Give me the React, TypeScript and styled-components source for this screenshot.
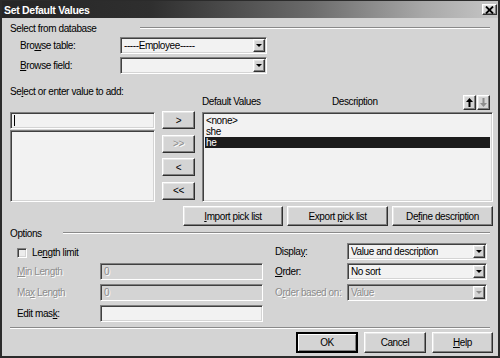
import React from 'react';
import styled, { createGlobalStyle, css } from 'styled-components';

const Global = createGlobalStyle`
  html, body { margin: 0; padding: 0; background: #d4d4d4; }
  body {
    font-family: "Liberation Sans", Arial, sans-serif;
    font-size: 10px;
    letter-spacing: -0.4px;
    color: #000;
  }
  * { box-sizing: border-box; }
`;

const sunken = css`
  border: 1px solid;
  border-color: #808080 #ffffff #ffffff #808080;
  box-shadow: inset 1px 1px 0 #404040, inset -1px -1px 0 #d4d4d4;
`;

const raised = css`
  border: 1px solid;
  border-color: #ffffff #303030 #303030 #ffffff;
  box-shadow: inset -1px -1px 0 #808080, inset 1px 1px 0 #e6e6e6;
  background: #d4d4d4;
`;

const disabledText = css`
  color: #8c8c8c;
  text-shadow: 1px 1px 0 #ffffff;
`;

const Window = styled.div`
  width: 500px;
  height: 358px;
  display: flex;
  flex-direction: column;
  background: #d4d4d4;
  border: 2px solid #2b2b2b;
  border-top-width: 1px;
  overflow: hidden;
`;

const TitleBar = styled.div`
  height: 17px;
  flex: none;
  display: flex;
  align-items: center;
  justify-content: space-between;
  padding: 0 1px 0 2px;
  background: linear-gradient(90deg, #262626 0%, #2f2f2f 30%, #6a6a6a 62%, #a8a8a8 85%, #c6c6c6 100%);
`;

const Title = styled.span`
  color: #fff;
  font-weight: bold;
  font-size: 10.5px;
  letter-spacing: -0.3px;
`;

const CloseButton = styled.span`
  ${raised};
  width: 15px;
  height: 11px;
  display: flex;
  align-items: center;
  justify-content: center;
`;

const Body = styled.div`
  flex: 1;
  display: flex;
  flex-direction: column;
  padding: 0 5px 0 8px;
`;

const GroupHeader = styled.div<{ $top: number }>`
  display: flex;
  height: 12px;
  line-height: 12px;
  margin-top: ${p => p.$top}px;
  padding-right: 3px;
`;

const GroupLine = styled.div<{ $width: number }>`
  margin-left: auto;
  margin-top: 4px;
  width: ${p => p.$width}px;
  height: 2px;
  border-top: 1px solid #8a8a8a;
  border-bottom: 1px solid #ffffff;
`;

const FieldRow = styled.div<{ $top: number }>`
  display: flex;
  align-items: center;
  height: 17px;
  margin-top: ${p => p.$top}px;
`;

const RowLabel = styled.span<{ $indent: number; $width: number }>`
  margin-left: ${p => p.$indent}px;
  width: ${p => p.$width}px;
`;

const U = styled.span`
  text-decoration: underline;
  text-underline-offset: 1px;
`;

const SelectBox = styled.div<{ $width?: number; $disabled?: boolean }>`
  ${sunken};
  width: ${p => (p.$width ? `${p.$width}px` : '100%')};
  height: 17px;
  display: flex;
  align-items: center;
  padding: 1px 1px 1px 3px;
  background: ${p => (p.$disabled ? '#d4d4d4' : '#f2f2f2')};
`;

const SelectText = styled.span<{ $disabled?: boolean }>`
  flex: 1;
  white-space: nowrap;
  overflow: hidden;
  ${p => p.$disabled && disabledText};
`;

const DropButton = styled.span`
  ${raised};
  width: 12px;
  height: 13px;
  flex: none;
  display: flex;
  align-items: center;
  justify-content: center;
`;

const Triangle = styled.span<{ $disabled?: boolean }>`
  width: 0;
  height: 0;
  border-left: 3px solid transparent;
  border-right: 3px solid transparent;
  border-top: 3px solid ${p => (p.$disabled ? '#8c8c8c' : '#000')};
`;

const MidGrid = styled.div`
  display: grid;
  grid-template-columns: 145px 33px 291px;
  grid-template-rows: 24px 90px;
  column-gap: 7px;
  row-gap: 2px;
  margin-top: 12px;
`;

const MidLabel = styled.div`
  grid-column: 1 / 3;
  line-height: 12px;
  white-space: nowrap;
`;

const ListHeader = styled.div`
  grid-column: 3;
  display: flex;
  align-items: flex-end;
  padding-right: 3px;
`;

const HeaderCell = styled.span<{ $width?: number }>`
  line-height: 12px;
  margin-bottom: 2px;
  ${p => (p.$width ? `width: ${p.$width}px;` : 'flex: 1;')}
`;

const ArrowButton = styled.span`
  ${raised};
  width: 13px;
  height: 15px;
  margin-left: 1px;
  display: flex;
  align-items: center;
  justify-content: center;
`;

const LeftColumn = styled.div`
  display: flex;
  flex-direction: column;
  gap: 1px;
`;

const TextInput = styled.div<{ $disabled?: boolean; $caret?: boolean }>`
  ${sunken};
  height: 17px;
  flex: none;
  padding: 0 3px;
  line-height: 15px;
  background: ${p => (p.$disabled ? '#d4d4d4' : '#f2f2f2')};
  ${p => p.$disabled && disabledText};
  ${p => p.$caret && css`
    &::before {
      content: '';
      display: inline-block;
      width: 1px;
      height: 11px;
      margin-top: 2px;
      background: #000;
      vertical-align: top;
    }
  `}
`;

const ListBox = styled.div`
  ${sunken};
  flex: 1;
  background: #f2f2f2;
  padding: 2px;
`;

const Item = styled.div<{ $selected?: boolean }>`
  height: 11px;
  line-height: 11px;
  padding-left: 1px;
  white-space: nowrap;
  ${p => p.$selected && css`
    background: #1c1c1c;
    color: #fff;
  `}
`;

const MoveColumn = styled.div`
  display: flex;
  flex-direction: column;
  justify-content: space-between;
  margin-top: -1px;
  margin-bottom: 2px;
`;

const ButtonFace = styled.span<{ $width?: number; $height: number; $disabled?: boolean; $default?: boolean }>`
  ${raised};
  width: ${p => (p.$width ? `${p.$width}px` : '100%')};
  height: ${p => p.$height}px;
  display: flex;
  align-items: center;
  justify-content: center;
  white-space: pre;
  ${p => p.$disabled && disabledText};
  ${p => p.$default && css`
    border-width: 2px;
    border-color: #000 #000 #000 #000;
    box-shadow: inset 1px 1px 0 #fff, inset -1px -1px 0 #808080;
  `}
`;

const ButtonLabel = styled.span`
  white-space: pre;
`;

const Button: React.FC<{
  width?: number;
  height: number;
  disabled?: boolean;
  isDefault?: boolean;
  children?: React.ReactNode;
}> = ({ width, height, disabled, isDefault, children }) => (
  <ButtonFace $width={width} $height={height} $disabled={disabled} $default={isDefault}>
    <ButtonLabel>{children}</ButtonLabel>
  </ButtonFace>
);

const ButtonRow = styled.div<{ $top: number; $gap: number }>`
  display: flex;
  justify-content: flex-end;
  gap: ${p => p.$gap}px;
  margin-top: ${p => p.$top}px;
`;

const OptionsArea = styled.div`
  display: flex;
  gap: 12px;
  margin-top: 3px;
  padding-left: 7px;
`;

const OptionsGrid = styled.div<{ $cols: string }>`
  display: grid;
  grid-template-columns: ${p => p.$cols};
  grid-template-rows: 20px 21px 21px 17px;
  align-items: start;
`;

const OptLabel = styled.span<{ $disabled?: boolean }>`
  line-height: 17px;
  white-space: nowrap;
  ${p => p.$disabled && disabledText};
`;

const CheckRow = styled.label`
  grid-column: 1 / 3;
  display: flex;
  align-items: center;
  height: 17px;
  margin-top: 1px;
`;

const CheckBox = styled.span`
  ${sunken};
  width: 10px;
  height: 10px;
  background: #ececec;
  margin-right: 5px;
`;

const Separator = styled.div`
  height: 2px;
  margin-top: 5px;
  margin-right: 3px;
  border-top: 1px solid #8a8a8a;
  border-bottom: 1px solid #ffffff;
`;

const Select: React.FC<{ value: string; width?: number; disabled?: boolean }> = ({ value, width, disabled }) => (
  <SelectBox $width={width} $disabled={disabled}>
    <SelectText $disabled={disabled}>{value}</SelectText>
    <DropButton>
      <Triangle $disabled={disabled} />
    </DropButton>
  </SelectBox>
);

const UpArrow: React.FC<{ color: string; down?: boolean }> = ({ color, down }) => (
  <svg width="7" height="9" viewBox="0 0 7 9" style={down ? { transform: 'rotate(180deg)' } : undefined}>
    <polygon points="3.5,0 7,4 4.5,4 4.5,9 2.5,9 2.5,4 0,4" fill={color} />
  </svg>
);

export default function App() {
  return (
    <>
      <Global />
      <Window>
        <TitleBar>
          <Title>Set Default Values</Title>
          <CloseButton>
            <svg width="9" height="8" viewBox="0 0 9 8">
              <path d="M1 0.5 L8 7.5 M8 0.5 L1 7.5" stroke="#000" strokeWidth="1.8" />
            </svg>
          </CloseButton>
        </TitleBar>
        <Body>
          <GroupHeader $top={5}>
            <span>Select from database</span>
            <GroupLine $width={350} />
          </GroupHeader>
          <FieldRow $top={2}>
            <RowLabel $indent={10} $width={100}>Bro<U>w</U>se table:</RowLabel>
            <Select value="-----Employee-----" width={147} />
          </FieldRow>
          <FieldRow $top={3}>
            <RowLabel $indent={10} $width={100}><U>B</U>rowse field:</RowLabel>
            <Select value="" width={147} />
          </FieldRow>

          <MidGrid>
            <MidLabel>Se<U>l</U>ect or enter value to add:</MidLabel>
            <ListHeader>
              <HeaderCell $width={130}>Default Values</HeaderCell>
              <HeaderCell>Description</HeaderCell>
              <ArrowButton><UpArrow color="#000" /></ArrowButton>
              <ArrowButton><UpArrow color="#8c8c8c" down /></ArrowButton>
            </ListHeader>
            <LeftColumn>
              <TextInput $caret />
              <ListBox />
            </LeftColumn>
            <MoveColumn>
              <Button height={18}>&gt;</Button>
              <Button height={18} disabled>&gt;&gt;</Button>
              <Button height={18}>&lt;</Button>
              <Button height={18}>&lt;&lt;</Button>
            </MoveColumn>
            <ListBox>
              <Item>&lt;none&gt;</Item>
              <Item>she</Item>
              <Item $selected>he</Item>
            </ListBox>
          </MidGrid>

          <ButtonRow $top={4} $gap={4}>
            <Button width={100} height={20}><U>I</U>mport pick list</Button>
            <Button width={101} height={20}>Export <U>p</U>ick list</Button>
            <Button width={101} height={20}>De<U>f</U>ine description</Button>
          </ButtonRow>

          <GroupHeader $top={2}>
            <span>Options</span>
            <GroupLine $width={427} />
          </GroupHeader>

          <OptionsArea>
            <OptionsGrid $cols="83px 163px">
              <CheckRow>
                <CheckBox />
                <span>Le<U>n</U>gth limit</span>
              </CheckRow>
              <OptLabel $disabled><U>M</U>in Length</OptLabel>
              <TextInput $disabled>0</TextInput>
              <OptLabel $disabled>Ma<U>x</U> Length</OptLabel>
              <TextInput $disabled>0</TextInput>
              <OptLabel>Edit mas<U>k</U>:</OptLabel>
              <TextInput />
            </OptionsGrid>
            <OptionsGrid $cols="72px 140px">
              <OptLabel>Displa<U>y</U>:</OptLabel>
              <Select value="Value and description" />
              <OptLabel><U>O</U>rder:</OptLabel>
              <Select value="No sort" />
              <OptLabel $disabled>O<U>r</U>der based on:</OptLabel>
              <Select value="Value" disabled />
            </OptionsGrid>
          </OptionsArea>

          <Separator />

          <ButtonRow $top={3} $gap={6}>
            <Button width={62} height={21} isDefault>OK</Button>
            <Button width={62} height={21}>Cancel</Button>
            <Button width={61} height={21}><U>H</U>elp</Button>
          </ButtonRow>
        </Body>
      </Window>
    </>
  );
}
